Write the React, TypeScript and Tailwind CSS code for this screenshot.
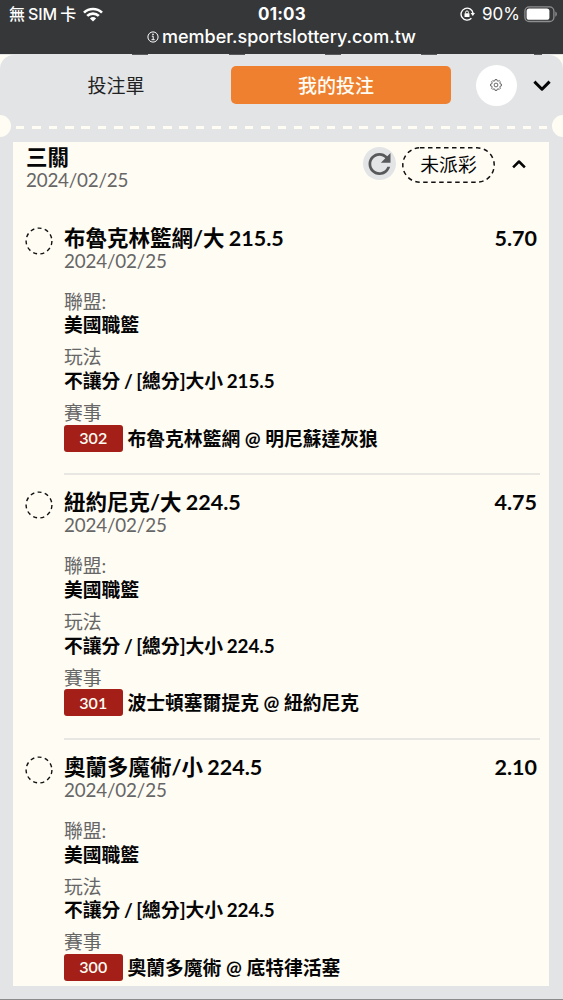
import { ChevronDown, ChevronUp } from 'lucide-react';

type Bet = {
  pick: string;
  odds: string;
  date: string;
  league: string;
  play: string;
  code: string;
  match: string;
};

const bets: Bet[] = [
  {
    pick: '布魯克林籃網/大 215.5',
    odds: '5.70',
    date: '2024/02/25',
    league: '美國職籃',
    play: '不讓分 / [總分]大小 215.5',
    code: '302',
    match: '布魯克林籃網 @ 明尼蘇達灰狼',
  },
  {
    pick: '紐約尼克/大 224.5',
    odds: '4.75',
    date: '2024/02/25',
    league: '美國職籃',
    play: '不讓分 / [總分]大小 224.5',
    code: '301',
    match: '波士頓塞爾提克 @ 紐約尼克',
  },
  {
    pick: '奧蘭多魔術/小 224.5',
    odds: '2.10',
    date: '2024/02/25',
    league: '美國職籃',
    play: '不讓分 / [總分]大小 224.5',
    code: '300',
    match: '奧蘭多魔術 @ 底特律活塞',
  },
];

function WifiIcon() {
  return (
    <svg viewBox="0 0 20 15" className="h-[15px] w-5" fill="none" stroke="white" strokeWidth="2.7">
      <path d="M1 5.6 A13 13 0 0 1 19 5.6" />
      <path d="M4.2 8.9 A8.3 8.3 0 0 1 15.8 8.9" />
      <path d="M10 14.6 L6.9 11.4 A4.5 4.5 0 0 1 13.1 11.4 Z" fill="white" stroke="none" />
    </svg>
  );
}

function RotationLockIcon() {
  return (
    <svg viewBox="0 0 16 14" className="h-[14px] w-4" fill="none" stroke="white" strokeWidth="1.4">
      <path d="M11.4 11.3 A6 6 0 1 1 13 6.2" />
      <path d="M10.6 6 H15 L12.8 9 Z" fill="white" stroke="none" />
      <rect x="4.5" y="6.2" width="5" height="3.9" rx="0.6" fill="white" stroke="none" />
      <path d="M5.6 6.4 V5.3 A1.4 1.4 0 0 1 8.4 5.3 V6.4" strokeWidth="1" />
    </svg>
  );
}

function BatteryIcon() {
  return (
    <svg viewBox="0 0 34 17" className="h-[17px] w-[34px]">
      <rect x="0.9" y="0.9" width="29" height="14.6" rx="4.3" fill="none" stroke="#8d8e8f" strokeWidth="1.3" />
      <rect x="2.6" y="2.6" width="22.8" height="11.2" rx="2.6" fill="white" />
      <path d="M31.3 5.6 C33.4 6.6 33.4 9.8 31.3 10.8 Z" fill="#8d8e8f" />
    </svg>
  );
}

function InfoIcon() {
  return (
    <svg viewBox="0 0 12 12" className="h-3 w-3" fill="none" stroke="white" strokeWidth="1">
      <circle cx="6" cy="6" r="5.1" />
      <path d="M4.8 5.2 H6.2 V8.6 M4.5 8.7 H7.7" />
      <circle cx="6" cy="3.4" r="0.8" fill="white" stroke="none" />
    </svg>
  );
}

function GearIcon() {
  return (
    <svg viewBox="0 0 24 24" className="h-3 w-3" fill="none" stroke="#444" strokeWidth="1.6" strokeLinejoin="round">
      <path d="M10.1 1.2 H13.9 L14.4 3.7 L16.2 4.5 L18.3 3 L21 5.7 L19.5 7.8 L20.3 9.6 L22.8 10.1 V13.9 L20.3 14.4 L19.5 16.2 L21 18.3 L18.3 21 L16.2 19.5 L14.4 20.3 L13.9 22.8 H10.1 L9.6 20.3 L7.8 19.5 L5.7 21 L3 18.3 L4.5 16.2 L3.7 14.4 L1.2 13.9 V10.1 L3.7 9.6 L4.5 7.8 L3 5.7 L5.7 3 L7.8 4.5 L9.6 3.7 Z" />
      <circle cx="12" cy="12" r="3.8" />
    </svg>
  );
}

function RefreshIcon() {
  return (
    <svg viewBox="0 0 24 24" className="h-[34px] w-[34px]" fill="#58595b">
      <path d="M17.65 6.35C16.2 4.9 14.21 4 12 4c-4.42 0-7.99 3.58-7.99 8s3.57 8 7.99 8c3.73 0 6.84-2.55 7.73-6h-2.08c-.82 2.33-3.04 4-5.65 4-3.31 0-6-2.69-6-6s2.69-6 6-6c1.66 0 3.14.69 4.22 1.78L13 11h7V4l-2.35 2.35z" />
    </svg>
  );
}

function StatusBar() {
  return (
    <header className="h-[54px] bg-[#363739] font-['Inter','Noto_Sans_CJK_TC',sans-serif] text-white">
      <div className="grid h-7 grid-cols-3 items-center pl-[9px] pr-[5px] text-[17px] leading-none">
        <div className="flex items-center gap-[7px]">
          <span className="whitespace-pre text-[16px] font-medium tracking-[-0.1px] [word-spacing:-1px]">無 SIM 卡</span>
          <WifiIcon />
        </div>
        <span className="pr-[3px] text-center font-bold tracking-[0.2px]">01:03</span>
        <div className="flex items-center justify-end">
          <RotationLockIcon />
          <span className="ml-1.5 mr-1 text-[17px]">90%</span>
          <BatteryIcon />
        </div>
      </div>
      <div className="flex h-[18px] items-center justify-center gap-[3px] text-[18px] font-medium leading-none">
        <InfoIcon />
        <span>member.sportslottery.com.tw</span>
      </div>
    </header>
  );
}

function TabBar() {
  return (
    <div className="flex h-[60px] items-center">
      <button className="w-[231px] pl-px text-[19px] leading-none text-[#222]">投注單</button>
      <button className="h-[38px] w-[220px] rounded-[5px] bg-[#ee8030] pr-[10px] text-[19px] font-medium leading-none text-[#fffcf4]">
        我的投注
      </button>
      <button className="ml-[24.5px] flex h-[41px] w-[41px] items-center justify-center rounded-full bg-white">
        <GearIcon />
      </button>
      <ChevronDown className="ml-3 mt-px h-[26px] w-[26px]" strokeWidth={2.8} strokeLinecap="square" />
    </div>
  );
}

// Perforated edge between the tabs and the slip
function TicketEdge() {
  return (
    <div className="flex h-[22px] items-center justify-between">
      <span className="h-[22px] w-[11px] rounded-r-full bg-[#fffcf4]" />
      <span className="mt-[3px] h-[3px] w-[531px] bg-[repeating-linear-gradient(90deg,#fffcf4_0_8.5px,transparent_8.5px_16.35px)]" />
      <span className="h-[22px] w-[11px] rounded-l-full bg-[#fffcf4]" />
    </div>
  );
}

function Field({ label, children }: { label: string; children: string }) {
  return (
    <div className="mb-2 text-[18.8px]">
      <p className="h-[23.7px] leading-[24px] text-[#666]">{label}</p>
      <p className="h-[24px] font-bold leading-[24px] [word-spacing:-1px]">{children}</p>
    </div>
  );
}

function BetItem({ bet, last }: { bet: Bet; last: boolean }) {
  return (
    <li className="flex h-[264.7px]">
      <svg viewBox="0 0 28 28" className="-ml-px h-7 w-7 shrink-0">
        <circle cx="14" cy="14" r="12.9" fill="none" stroke="#111" strokeWidth="1.4" strokeDasharray="4 3.37" />
      </svg>
      <div className="ml-[11px] flex-1">
        <div className="flex h-[23px] justify-between pr-[3px] text-[21.5px] font-bold leading-[22px]">
          <h3 className="[word-spacing:-1px]">{bet.pick}</h3>
          <span>{bet.odds}</span>
        </div>
        <p className="mb-[17px] h-[23px] text-[18.8px] leading-[21px] tracking-[-0.15px] text-[#666]">{bet.date}</p>
        <Field label="聯盟:">{bet.league}</Field>
        <Field label="玩法">{bet.play}</Field>
        <p className="h-[23.5px] text-[18.8px] leading-[24px] text-[#666]">賽事</p>
        <div className="flex h-[27px] items-center text-[18.8px] font-bold leading-none">
          <span className="flex h-[27px] w-[58.5px] items-center justify-center rounded-[3px] bg-[#a31f17] text-[16px] font-semibold text-[#fffcf4]">
            {bet.code}
          </span>
          <span className="ml-[5px] leading-[27px]">{bet.match}</span>
        </div>
        {!last && <hr className="mt-[21.5px] border-t-2 border-[#e9e7e2]" />}
      </div>
    </li>
  );
}

function Slip() {
  return (
    <section className="ml-[13px] mr-[14px] mt-[4.5px] h-[844px] overflow-hidden bg-[#fffcf4] pl-[13px] pr-[9px]">
      <div className="flex h-[85.2px] items-start">
        <div className="flex-1 pt-1">
          <h2 className="h-[22px] text-[21.5px] font-bold leading-[22px]">三關</h2>
          <p className="h-[23px] text-[18.8px] leading-[23px] tracking-[-0.2px] text-[#666]">2024/02/25</p>
        </div>
        <button className="mt-[5.5px] flex h-[33px] w-[33px] items-center justify-center rounded-full bg-[#e3e4e6]">
          <RefreshIcon />
        </button>
        <div className="relative ml-[6px] mt-[5px] flex h-[36px] w-[93px] items-center justify-center text-[18.8px]">
          <svg viewBox="0 0 93 36" className="absolute inset-0 h-full w-full">
            <rect
              x="0.8"
              y="0.8"
              width="91.4"
              height="34.4"
              rx="17.2"
              fill="none"
              stroke="#111"
              strokeWidth="1.5"
              strokeDasharray="4.5 3.5"
            />
          </svg>
          <span className="pt-px">未派彩</span>
        </div>
        <ChevronUp className="ml-[14px] mr-[11px] mt-3 h-5 w-5" strokeWidth={3} strokeLinecap="square" />
      </div>
      <ul>
        {bets.map((bet, i) => (
          <BetItem key={bet.code} bet={bet} last={i === bets.length - 1} />
        ))}
      </ul>
    </section>
  );
}

export default function App() {
  return (
    <div className="h-[1000px] w-[563px] overflow-hidden bg-[#fffcf4] font-['Lato','Noto_Sans_CJK_TC',sans-serif] text-[#050505]">
      <StatusBar />
      {/* bottoms of the labels hidden behind the sheet */}
      <div className="flex h-px bg-[#e3e4e6] pl-[132px]">
        <span className="w-4 bg-black/60" />
        <span className="ml-[81px] w-4 bg-black/60" />
        <span className="ml-20 w-4 bg-black/60" />
        <span className="ml-20 w-4 bg-black/60" />
        <span className="ml-[97px] w-2 bg-black/60" />
      </div>
      <main className="h-[945px] rounded-t-[14px] border-b border-[#8b8b8b] bg-[#e3e4e6]">
        <TabBar />
        <TicketEdge />
        <Slip />
      </main>
    </div>
  );
}
